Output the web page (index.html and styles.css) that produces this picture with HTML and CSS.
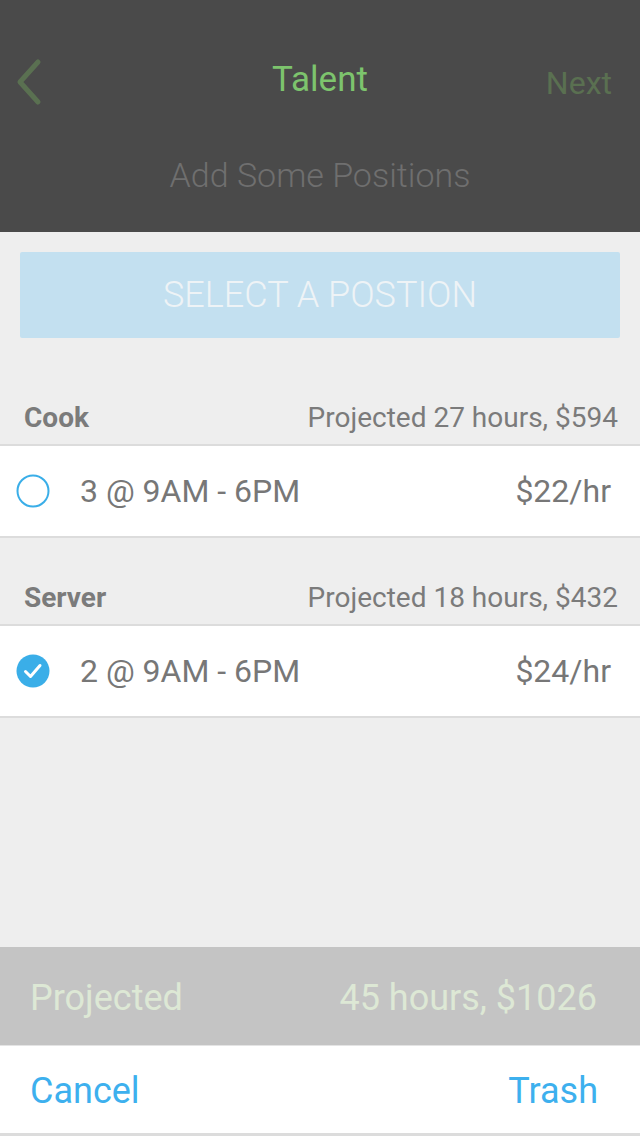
FILE: index.html
```html
<!DOCTYPE html>
<html>
<head>
<meta charset="utf-8">
<link rel="stylesheet" href="styles.css">
</head>
<body>
<div class="app">
  <header class="top">
    <div class="nav">
      <svg class="back" width="40" height="50" viewBox="0 0 40 50"><polyline points="28,5 10,25 28,45" fill="none" stroke="#5a7051" stroke-width="5" stroke-linecap="round" stroke-linejoin="round"/></svg>
      <div class="title">Talent</div>
      <div class="next">Next</div>
    </div>
    <div class="subtitle">Add Some Positions</div>
  </header>
  <main class="content">
    <div class="select">SELECT A POSTION</div>
    <section class="group">
      <div class="group-head"><span class="role">Cook</span><span class="proj">Projected 27 hours, $594</span></div>
      <div class="row">
        <svg class="radio" width="34" height="34" viewBox="0 0 34 34"><circle cx="17" cy="17" r="15.5" fill="none" stroke="#3aaee8" stroke-width="2"/></svg>
        <span class="shift">3 @ 9AM - 6PM</span>
        <span class="rate">$22/hr</span>
      </div>
    </section>
    <section class="group">
      <div class="group-head"><span class="role">Server</span><span class="proj">Projected 18 hours, $432</span></div>
      <div class="row">
        <svg class="radio" width="34" height="34" viewBox="0 0 34 34"><circle cx="17" cy="17" r="16.5" fill="#3aaee8"/><polyline points="9.5,17.5 14.5,22.5 24,11.5" fill="none" stroke="#fff" stroke-width="3" stroke-linecap="round" stroke-linejoin="round"/></svg>
        <span class="shift">2 @ 9AM - 6PM</span>
        <span class="rate">$24/hr</span>
      </div>
    </section>
  </main>
  <div class="total"><span>Projected</span><span>45 hours, $1026</span></div>
  <footer class="actions"><span>Cancel</span><span>Trash</span></footer>
</div>
</body>
</html>
```
FILE: styles.css
```css
html, body { margin: 0; padding: 0; }
body { font-family: Roboto, "Liberation Sans", sans-serif; background: #eeeeee; }
.app { width: 640px; height: 1136px; display: flex; flex-direction: column; overflow: hidden; }
.top { height: 232px; background: #4a4a4a; flex: none; display: flex; flex-direction: column; padding-top: 52px; box-sizing: border-box; }
.nav { height: 60px; display: grid; grid-template-columns: 1fr auto 1fr; align-items: center; padding: 0 28px; }
.back { justify-self: start; margin-left: -18px; }
.title { color: #7dc46d; font-size: 35px; line-height: 48px; margin-top: -4px; }
.next { justify-self: end; color: #5a7051; font-size: 32px; line-height: 48px; margin-top: 2px; }
.subtitle { text-align: center; color: #6f6f6f; font-size: 34px; font-weight: 300; line-height: 40px; margin-top: 43px; }
.content { flex: 1; }
.select { margin: 20px 20px 20px; height: 86px; background: #c3e0f0; border-radius: 2px; color: #eef3f6; font-size: 36px; font-weight: 300; display: flex; align-items: center; justify-content: center; }
.group { padding-top: 32px; }
.group-head { height: 54px; display: flex; align-items: center; justify-content: space-between; padding: 0 22px 0 24px; border-bottom: 2px solid #dcdcdc; color: #7b7b7b; font-size: 28px; }
.role { font-weight: 700; }
.row { height: 90px; background: #fff; border-bottom: 2px solid #dcdcdc; display: flex; align-items: center; padding: 0 29px 0 16px; color: #777; font-size: 32px; }
.shift { margin-left: 30px; flex: 1; }
.total { height: 99px; flex: none; background: #c4c4c4; border-bottom: 1px solid #e4e4e4; display: flex; align-items: center; justify-content: space-between; padding: 4px 43px 0 30px; box-sizing: border-box; color: #dde8d5; font-size: 36px; }
.actions { height: 85px; flex: none; background: #fff; border-bottom: 3px solid #dcdcdc; display: flex; align-items: center; justify-content: space-between; padding: 2px 42px 0 30px; color: #3db0ee; font-size: 36px; }
```
